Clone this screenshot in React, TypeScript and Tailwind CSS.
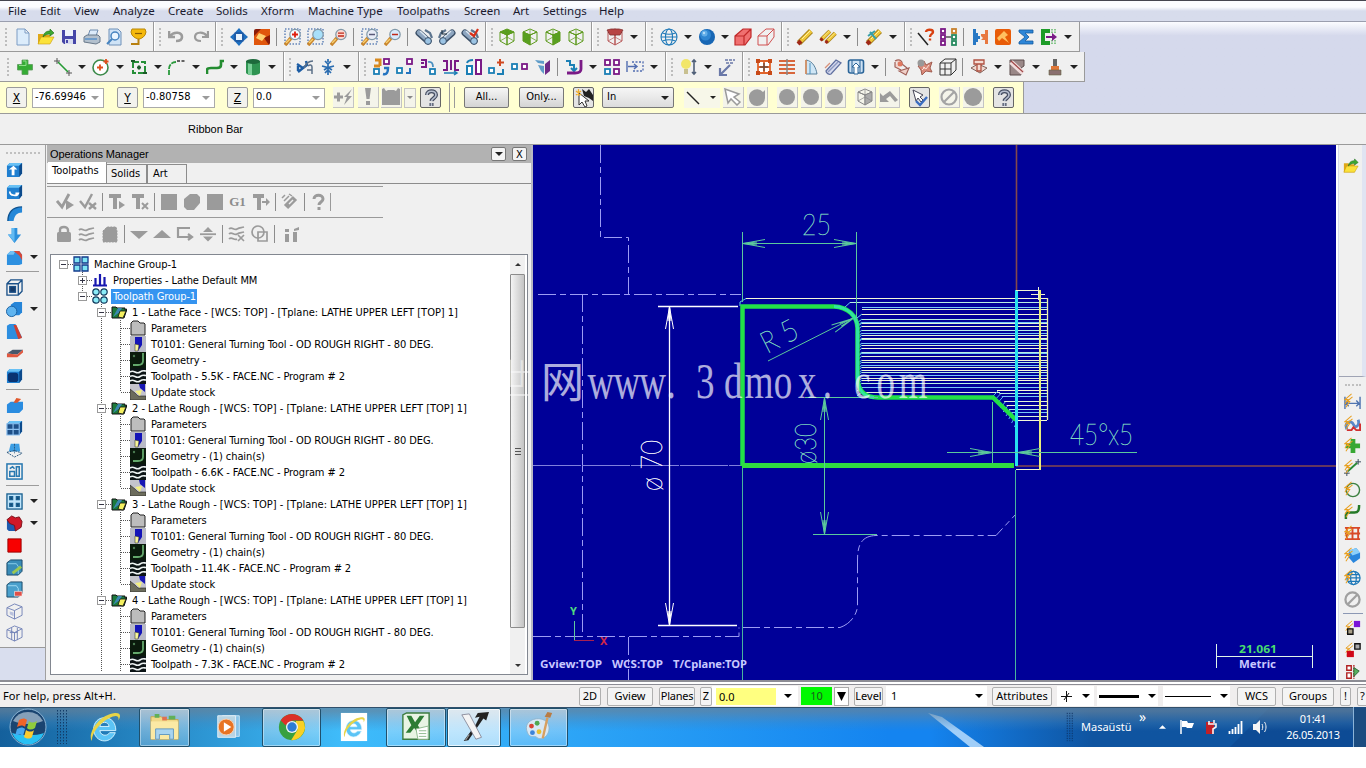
import type { ReactNode } from "react";
import { clsx } from "clsx";

const tahoma = "font-['DejaVu_Sans_Condensed','DejaVu_Sans',sans-serif]";
const segoe = "font-['Noto_Sans','Open_Sans',sans-serif]";

// ---------------------------------------------------------------- icons
// every glyph is drawn on an 18x18 grid

const bolt = (
  <path d="M8 1L1 7h3l-3 5M9 4L3 9h3l-4 6" fill="none" stroke="#e8a020" strokeWidth="1.1" />
);

const lens = (ring: string, sign?: ReactNode, box?: boolean) => (
  <>
    {box && <rect x="1" y="1" width="15" height="15" fill="none" stroke="#1c4f9c" strokeDasharray="1.5 1.5" />}
    <path d="M1 17L7 10" stroke="#c8852c" strokeWidth="3.6" />
    <path d="M2 15L6 11" stroke="#f7d070" strokeWidth="1.4" />
    <circle cx="11" cy="6.5" r="5.2" fill={ring} stroke="#8098a8" strokeWidth="1.2" />
    {sign}
  </>
);

const cube = (face: number, line = "#5d9a1c", fill = "#58a020") => (
  <g stroke={line} strokeWidth="1" strokeLinejoin="round">
    <path d="M9 1l7 3-7 3-7-3z" fill={face === 0 ? fill : "none"} />
    <path d="M2 4v9l7 4V7z" fill={face === 1 ? fill : "none"} />
    <path d="M16 4v9l-7 4V7z" fill={face === 2 ? fill : "none"} />
    <path d="M2 13l7-4 7 4M9 2v6" fill="none" strokeWidth=".7" />
  </g>
);

const blueBox = (extra?: ReactNode) => (
  <>
    <path d="M1 5l3-3h13v11l-3 4H1z" fill="#1f7fd0" />
    <path d="M1 5l3-3h13l-3 3z" fill="#69c1f5" />
    <path d="M14 5l3-3v11l-3 4z" fill="#0c4a8c" />
    {extra}
  </>
);

const wireBox = (line: string, inner?: ReactNode) => (
  <>
    <path d="M1 5l8-4 8 3v9l-8 4-8-4zM1 5l8 3 8-4M9 8v9" fill="none" stroke={line} />
    {inner}
  </>
);

const binocular = (extra?: ReactNode) => (
  <>
    <path d="M4 5l9 8" stroke="#3c5068" strokeWidth="7" strokeLinecap="round" />
    <path d="M4 4.500l8 7" stroke="#8ea6c0" strokeWidth="4.500" strokeLinecap="round" />
    <path d="M5 3l7 6.500" stroke="#dde8f2" strokeWidth="1.400" />
    <circle cx="13" cy="13" r="3.400" fill="#9cc4e4" stroke="#3c5068" />
    <path d="M10 2l5 3 2 5" fill="none" stroke="#5c748e" strokeWidth="2.200" />
    {extra}
  </>
);

const pencil = (
  <>
    <path d="M3 15L15 3" stroke="#a88420" strokeWidth="5.600" />
    <path d="M4 14L15 3" stroke="#f0c838" strokeWidth="3.800" />
    <path d="M2 16l3-3" stroke="#a02818" strokeWidth="4" />
    <path d="M6 11l8-8" stroke="#fff0a0" />
  </>
);

const sq = (x: number, y: number, c: string, s = 5) => (
  <rect x={x} y={y} width={s} height={s} fill="#fff" stroke={c} strokeWidth="1.8" />
);

const G = "#9b9b9b";
const teal = "#1b7fb5";
const plum = "#7a1a86";

const icons: Record<string, ReactNode> = {
  new: <path d="M3 1h8l4 4v12H3zM11 1v4h4" fill="#dcecfb" stroke="#7d9cc4" />,
  open: (
    <>
      <path d="M1 16V6h5l1 1h6v9z" fill="#e0a818" />
      <path d="M1 16l3-7h13l-4 7z" fill="#fbe23a" stroke="#c99a10" strokeWidth=".6" />
      <path d="M6 9c1-5 4-6 7-6V1l4 4-4 3V6c-3 0-5 1-7 3z" fill="#3da832" stroke="#1d6a18" strokeWidth=".6" />
    </>
  ),
  save: (
    <>
      <path d="M2 2h14v14H4l-2-2z" fill="#4646a8" />
      <rect x="5" y="2" width="8" height="6" fill="#eef2fb" />
      <rect x="5" y="11" width="8" height="5" fill="#d8dcf0" />
      <rect x="6" y="12" width="2" height="3" fill="#4646a8" />
    </>
  ),
  print: (
    <>
      <path d="M5 8l2-6h8l-2 6z" fill="#dcebfa" stroke="#6f8cae" />
      <path d="M1 9l3-2h11l2 2v5l-4 2-12-2z" fill="#b3c0cd" stroke="#68788a" />
      <path d="M2 11h12" stroke="#5a92c8" strokeWidth="1.5" />
    </>
  ),
  preview: (
    <>
      <path d="M3 1h9l3 3v13H3z" fill="#cfe3f6" stroke="#6f90b8" />
      <circle cx="9" cy="8" r="4" fill="#eaf6ff" stroke="#4684c0" strokeWidth="1.5" />
      <path d="M6 11l-5 5" stroke="#4684c0" strokeWidth="2" />
    </>
  ),
  verify: (
    <>
      <path d="M3 1h13l1 3-1 3c-2 3-5 4-6 4S5 10 3 7L2 4z" fill="#f5b90c" stroke="#b98706" />
      <path d="M6 5.500h7" fill="none" stroke="#8a5c04" strokeWidth="1.200" />
      <path d="M9.500 11v5H2" fill="none" stroke="#b88010" strokeWidth="2" />
    </>
  ),
  undo: <path d="M1 3v6h6M2 8c4-5 12-4 12 1 0 3-3 4-6 4" fill="none" stroke={G} strokeWidth="2.6" />,
  redo: <path d="M17 3v6h-6M16 8C12 3 4 4 4 9c0 3 3 4 6 4" fill="none" stroke={G} strokeWidth="2.2" />,
  fit: (
    <>
      <path d="M9 0l4 4.500H5zM9 18l4-4.500H5zM0 9l4.500-4v8zM18 9l-4.500-4v8z" fill="#1d6fc0" />
      <rect x="5" y="5" width="8" height="8" rx="1" fill="#e8f2fc" stroke="#1d5ca8" strokeWidth="2" />
    </>
  ),
  repaint: (
    <>
      <rect x="1" y="1" width="16" height="16" rx="2" fill="#8a1c08" />
      <path d="M1 17V8l7-7h9v6l-6 3 5 7z" fill="#e0560c" />
      <path d="M6 5l7 3-4 5-6-3z" fill="#ffd070" />
    </>
  ),
  zoomWin: lens("#f4fbff", <path d="M11 3.500v6M8 6.500h6" stroke="#e02010" strokeWidth="1.8" />, true),
  zoomTarget: lens("#a8e0fa", null, true),
  zoomIn: lens("#fbd8d0", <path d="M8 5.200h6M8 8h6" stroke="#c02818" strokeWidth="1.3" />),
  unzoom: lens("#e8ecf6", <path d="M8 6.500h6" stroke="#5a5a78" strokeWidth="1.5" />, true),
  unzoom2: lens("#d8eafc", <path d="M8 6.500h6" stroke="#c02818" strokeWidth="1.5" />),
  bino1: binocular(),
  bino2: <g transform="matrix(-1 0 0 1 18 0)">{binocular(<path d="M9 6h5V2" fill="none" stroke="#123" />)}</g>,
  bino3: binocular(<path d="M9 5l4 3 4-7" fill="none" stroke="#d83018" strokeWidth="2.200" />),
  cubeTop: cube(0),
  cubeFront: cube(1),
  cubeRight: cube(2),
  cubeIso: cube(3),
  cubeRed: (
    <>
      {cube(3, "#b85858", "none")}
      <path d="M1 2l4-1h8l4 1-3 5H4z" fill="#b84444" stroke="#803030" strokeWidth=".8" />
    </>
  ),
  globe: (
    <g fill="none" stroke="#1d78b8" strokeWidth="1.1">
      <circle cx="9" cy="9" r="8" />
      <ellipse cx="9" cy="9" rx="3.500" ry="8" />
      <path d="M1 9h16M2.500 5c4 1.500 9 1.500 13 0M2.500 13c4-1.500 9-1.500 13 0" />
    </g>
  ),
  sphere: (
    <>
      <circle cx="9" cy="9" r="8" fill="#1766b4" />
      <circle cx="7.500" cy="7" r="5.500" fill="#2f86d2" />
      <circle cx="6.500" cy="5.500" r="3" fill="#62aee8" />
      <circle cx="6" cy="5" r="1.200" fill="#b4dcf8" />
    </>
  ),
  solidRed: <path d="M1 8l8-7h8v8l-6 8H1zM1 8h9v9M10 8l7-7" fill="#f07070" stroke="#c02828" strokeWidth="1.200" />,
  wireRed: <path d="M1 8l8-7h8v8l-6 8H1zM1 8h9v9M10 8l7-7" fill="none" stroke="#d05050" />,
  pencil,
  pencils: (
    <>
      <g transform="translate(5 3) scale(.75)">{pencil}</g>
      <g transform="translate(0 1) scale(.72)">{pencil}</g>
    </>
  ),
  pencilBlue: (
    <>
      {pencil}
      <path d="M5 4l6 7M3 8l7-5" stroke="#38a0a8" strokeWidth="2" />
    </>
  ),
  whatLine: (
    <>
      <path d="M1 5l10 12" stroke="#222" strokeWidth="1.500" />
      <path d="M9 4c0-3 7-3 7 0 0 2-3 2-3 5M13 10.500v2" fill="none" stroke="#d84010" strokeWidth="2.400" />
    </>
  ),
  levels: (
    <>
      {[1, 7, 13].map((y) => (
        <g key={y}>
          {sq(1, y, plum, 4)}
          {sq(12, y, y === 1 ? "#c8802c" : "#278a60", 4)}
        </g>
      ))}
      <path d="M6 9h5" stroke="#555" strokeWidth="1.500" />
    </>
  ),
  import: (
    <>
      <path d="M2 1h3v4h2v3h2v3H7v3H5v3H2z" fill="#2878c4" />
      <path d="M17 2h-3v4h-4v2l2 2-2 2h4v4h3z" fill="#e87840" />
    </>
  ),
  flame: (
    <>
      <rect x="1" y="1" width="16" height="16" rx="2" fill="#e85c08" />
      <path d="M3 10l7-7 4 4-3 2 4 6-7-5-3 3z" fill="#ffc060" />
    </>
  ),
  sigma: <path d="M16 2H2v2l6 5-6 5v2h14v-3H8l4-4-4-4h8z" fill="#2d86d8" stroke="#155aa0" strokeWidth=".8" />,
  post: (
    <>
      <path d="M10 3H3v12h7" fill="none" stroke="#1e9c28" strokeWidth="4" />
      <path d="M12 1v5M15 1v5M12 12v5M15 12v5" stroke="#1e9c28" strokeDasharray="1.500 1" />
      <path d="M6 8h6V5l5 4-5 4v-3H6z" fill={plum} />
    </>
  ),
  plus: (
    <>
      <path d="M6 2h6v4.500h4.500v5.500H12v4.500H6V12H1.500V6.500H6z" fill="#35ac34" stroke="#5a9a5a" strokeWidth=".8" />
      <path d="M7 3h3v4.500H3" fill="none" stroke="#8ce088" />
    </>
  ),
  line: (
    <>
      <path d="M4 4l10 10" stroke="#259a34" strokeWidth="1.600" />
      <path d="M0 3h6M3 0v6M12 15h6M15 12v6" stroke="#555" />
    </>
  ),
  arc: (
    <>
      <circle cx="8.500" cy="9.500" r="7.500" fill="#fff" stroke="#3c8a4a" strokeWidth="1.600" />
      <path d="M8 6.500v6M5 9.500h6M14 1v5M11.500 3.500h5" stroke="#e0501c" strokeWidth="1.800" />
    </>
  ),
  rect: (
    <>
      <path d="M3 4h12v11H3z" fill="none" stroke="#268f38" strokeWidth="2" strokeDasharray="6 2" />
      <path d="M1 3h4M7 9.500h4M9 7.500v4M13 15h4" stroke="#1b5a28" strokeWidth="2.200" />
    </>
  ),
  fillet: (
    <>
      <path d="M1 17v-6c0-4 3-7 7-7" fill="none" stroke="#2a9a3c" strokeWidth="1.800" strokeDasharray="5 1" />
      <path d="M9 3h9" stroke="#333" strokeWidth="1.600" strokeDasharray="3 1.500" />
    </>
  ),
  spline: <path d="M1 16v-4c0-2 2-2 4-2h6c3 0 4-1 4-3V3h3" fill="none" stroke="#238c30" strokeWidth="2.600" />,
  cylinder: (
    <>
      <path d="M2 3v12c2 3 12 3 14 0V3z" fill="#2f9452" />
      <path d="M4 4v12c1 1 3 1 4 1V5z" fill="#7ad098" />
      <ellipse cx="9" cy="3.500" rx="7" ry="2.500" fill="#1d6a3c" />
    </>
  ),
  trim: (
    <>
      <path d="M1 6l6 4-5 4M7 10l4-3-1-4M2 8v5" fill="none" stroke="#1c5ca4" strokeWidth="2.400" />
      <path d="M8 10c2-5 5-7 9-7M12 8c2-2 4-1 4 1v7M11 12h5" fill="none" stroke="#5c7088" strokeWidth="1.500" />
    </>
  ),
  snow: (
    <path
      d="M9 1v3M9 6v6M9 14v3M6 3l3 3 3-3M3 8l6 1.500L15 8M5 12l4-2.500 4 2.500M6 15l3-3 3 3"
      fill="none"
      stroke="#2a6cb0"
      strokeWidth="1.700"
    />
  ),
  x1: (
    <>
      {sq(11, 1, plum)}
      {sq(1, 11, teal)}
      <path d="M2 2h5v6M1 8h6" fill="none" stroke="#d88a20" strokeWidth="3" />
      <path d="M10 16c4 1 5-2 5-6h-4" fill="none" stroke="#2474c0" strokeWidth="2.500" />
    </>
  ),
  x2: (
    <>
      {sq(11, 1, plum)}
      {sq(1, 10, teal)}
      <path d="M10 15h4v-5" fill="none" stroke="#2474c0" strokeWidth="2" />
    </>
  ),
  x3: (
    <>
      <path d="M2 2h5v7H2M2 5h3" fill="none" stroke={plum} strokeWidth="2" />
      {sq(11, 11, teal)}
      <path d="M9 4c4-1 5 2 5 5" fill="none" stroke="#4a90c0" strokeWidth="1.800" />
    </>
  ),
  x4: (
    <>
      <path d="M1 3h4v9H1M17 3h-4v9h4M9 2v10" fill="none" stroke={plum} strokeWidth="2" />
      <path d="M2 15h13M12 13l3 2-3 2" fill="none" stroke={teal} strokeWidth="1.500" />
    </>
  ),
  x5: (
    <>
      <rect x="11" y="2" width="5" height="14" fill="#fff" stroke={plum} strokeWidth="2" />
      <rect x="2" y="8" width="5" height="8" fill="#fff" stroke={teal} strokeWidth="2" />
      <path d="M2 5c1-3 4-3 6-3" fill="none" stroke={teal} strokeWidth="2" />
    </>
  ),
  x6: (
    <>
      <path d="M12 1v7M9 4.500h7" stroke="#d04820" strokeWidth="2" />
      {sq(1, 10, teal)}
      <path d="M9 16h6v-5" fill="none" stroke={teal} strokeWidth="2" />
    </>
  ),
  x7: (
    <>
      {sq(1, 6, teal)}
      {sq(11, 6, plum)}
    </>
  ),
  x8: (
    <>
      <path d="M1 2l9 1v3L4 5zM4 7l6 1v8l-3-3z" fill="#5f9cc8" />
      <path d="M11 6l5-4v11l-5 4z" fill="#6d2a86" />
    </>
  ),
  x9: (
    <>
      <path d="M1 3h4v4h4v5M6 10l3 3 3-3" fill="none" stroke={teal} strokeWidth="2" />
      <path d="M16 2v9c0 3-3 4-6 4H2" fill="none" stroke={plum} strokeWidth="2.800" />
    </>
  ),
  x10: (
    <>
      {sq(2, 2, plum)}
      {sq(11, 2, plum)}
      {sq(2, 11, teal)}
      {sq(11, 11, plum)}
    </>
  ),
  x11: (
    <>
      <path d="M6 4h11v9H6" fill="none" stroke="#506cb0" strokeWidth="1.300" strokeDasharray="2 1.500" />
      <path d="M1 3v11M2 8.500h9M8 6l3 2.500L8 11" fill="none" stroke="#506cb0" strokeWidth="1.400" />
    </>
  ),
  bulb: (
    <>
      <circle cx="6" cy="6" r="5" fill="#f2e66a" />
      <path d="M4 11h4v5H4z" fill="#c8c090" />
      <path d="M14 2v14M12 4l2-2 2 2M12 14l2 2 2-2" fill="none" stroke="#506078" strokeWidth="1.600" />
    </>
  ),
  note: (
    <>
      <path d="M7 2h10M8 5h8" stroke="#6a78a8" strokeWidth="1.500" strokeDasharray="3 1" />
      <path d="M12 7l-9 9M2 10v7h7" fill="none" stroke="#6a78a8" strokeWidth="2.200" />
    </>
  ),
  grid: (
    <>
      <path d="M3 3h12v12H3zM9 3v12M3 9h12" fill="#fff" stroke="#e0642c" strokeWidth="1.800" />
      <path d="M9 5v8M5 9h8" stroke="#444" />
      {[2, 14].map((a) => [2, 14].map((b) => <rect key={a + "-" + b} x={a - 1} y={b - 1} width="4" height="4" fill="#c84a18" />))}
    </>
  ),
  ruled: (
    <>
      <path d="M1 3h16M1 7h16M1 11h16M1 15h16" stroke="#d8663c" strokeWidth="2" />
      <path d="M9 1v16" stroke="#888" strokeWidth="1.500" />
    </>
  ),
  revolve: (
    <>
      <path d="M5 16V2c7 1 10 8 11 14z" fill="#cfe6f6" stroke="#58809c" />
      <path d="M9 16V5" stroke="#4c90bc" />
      <path d="M5 2v14" stroke="#e08a50" strokeWidth="1.500" />
    </>
  ),
  sweep: (
    <>
      <path d="M2 13L12 2l5 3L7 16c-2 1-5-1-5-3z" fill="#d6daee" stroke="#6070a0" strokeWidth="1.300" />
      <path d="M4 14L14 4" stroke="#8c98c0" strokeWidth="1.500" />
      <path d="M1 10l5-5" stroke="#d89078" strokeWidth="1.300" />
    </>
  ),
  netUp: (
    <>
      <rect x="1.500" y="2" width="15" height="13" rx="2" fill="#cfe2f4" stroke="#2a6498" strokeWidth="1.600" />
      <path d="M5 2v12M13 2v12" stroke="#2a6498" />
      <path d="M9 5l4 4h-2v7H7V9H5z" fill="#fff" stroke="#2a6498" />
    </>
  ),
  drill: (
    <>
      <path d="M2 3c5-3 9 1 6 5M2 4v5l6 3M6 13l10-3-3 7-7-4zM9 6l5 4" fill="#f0d0c8" stroke="#a06058" strokeWidth="1.200" />
      <circle cx="7" cy="6" r="2.500" fill="#e07860" />
    </>
  ),
  swirl: (
    <>
      <path d="M2 8l6-5 2 4 6-3-2 6 2 4-6-1-4 4-1-5z" fill="#d88878" stroke="#a05c50" />
      <path d="M7 9l3 2 3-4M6 12l3-3" fill="none" stroke="#fae0d8" />
      <circle cx="5" cy="5" r="3.500" fill="#999" />
    </>
  ),
  wcube: <path d="M1 5h11v12H1zM1 5l5-4h11v11l-5 5M12 5l5-4M6 5v12M1 11h11" fill="none" stroke="#333" />,
  mill1: (
    <>
      <path d="M1 10l7-4 9 4-7 5z" fill="#f0d8d0" stroke="#806058" />
      <path d="M4 2h10v4H4zM7 6v7h4V6" fill="#f4dcd4" stroke="#b05040" strokeWidth="1.300" />
    </>
  ),
  mill2: (
    <>
      <path d="M2 2h14v6l-3 2v7H2z" fill="#9a8888" stroke="#5c4c4c" />
      <path d="M3 4l12 11" stroke="#f0dcdc" strokeWidth="5" />
      <path d="M3 3l12 11" stroke="#a04848" strokeWidth="1.200" />
    </>
  ),
  mill3: (
    <>
      <path d="M7 1h4v7H7z" fill="#666" />
      <path d="M5 8h8v4H5z" fill="#e07838" />
      <path d="M3 12h12v5H3z" fill="#8a7070" stroke="#664" strokeWidth=".6" />
    </>
  ),

  // grey buttons on the operations manager toolbars
  selAll: (
    <>
      <path d="M1 8l5 6 7-13" fill="none" stroke={G} strokeWidth="2.800" />
      <path d="M10 7l8 5-8 5z" fill={G} />
    </>
  ),
  selNone: <path d="M1 8l5 6 7-13M10 10l7 6M17 10l-7 6" fill="none" stroke={G} strokeWidth="2.400" />,
  regen: <path d="M1 1h12v4H9v11H5V5H1zM11 8l6 4-6 4z" fill={G} />,
  regenX: (
    <>
      <path d="M1 1h12v4H9v11H5V5H1z" fill={G} />
      <path d="M11 10l6 6M17 10l-6 6" stroke={G} strokeWidth="2" />
    </>
  ),
  block: <path d="M1 1h16v16H1z" fill={G} />,
  blob: <path d="M1 6l6-5h7l3 3v6l-6 7H4l-3-3z" fill={G} />,
  tRight: <path d="M1 1h11v4H9v12H5V5H1zM10 8h4V5l4 4-4 4v-3h-4z" fill={G} />,
  feed: (
    <>
      <path d="M5 14L14 5" stroke={G} strokeWidth="6" />
      <path d="M1 5l3-3M3 8l5-5M8 1l3 2" stroke={G} strokeWidth="1.500" />
      <path d="M8 11l4-4" stroke="#eee" strokeWidth="1.500" />
    </>
  ),
  helpG: <path d="M4 6c0-5 9-5 9 0 0 3-4 3-4 6M9 14v3" fill="none" stroke={G} strokeWidth="3" />,
  lock: (
    <>
      <rect x="2" y="7" width="14" height="10" rx="1.500" fill={G} />
      <path d="M5 8V5c0-4 8-4 8 0v3" fill="none" stroke={G} strokeWidth="2.400" />
    </>
  ),
  waves: (
    <path
      d="M1 5c3-3 5 2 8 0s4-1 7-2M1 10c3-3 5 2 8 0s4-1 7-2M1 15c3-3 5 2 8 0s4-1 7-2"
      fill="none"
      stroke={G}
      strokeWidth="1.800"
    />
  ),
  lockW: <path d="M2 6l4-4h9l1 4v11H2z" fill={G} stroke={G} strokeDasharray="2 1" />,
  down: <path d="M0 6h18l-9 8z" fill={G} />,
  up: <path d="M0 13h18L9 5z" fill={G} />,
  loop: <path d="M14 3H2v9h13M12 9l4 3-4 3" fill="none" stroke={G} strokeWidth="2.200" />,
  updown: (
    <>
      <path d="M4 7h10L9 2zM4 11.500h10l-5 5z" fill={G} />
      <path d="M1 9.200h16" stroke={G} strokeWidth="1.800" />
    </>
  ),
  wavesX: (
    <path
      d="M1 4c3-3 5 2 8 0s4-1 7-2M1 9c3-3 5 2 8 0s4-1 7-2M1 14c3-3 5 2 8 0M10 10l6 6M16 10l-6 6"
      fill="none"
      stroke={G}
      strokeWidth="1.700"
    />
  ),
  overlap: (
    <g fill="none" stroke={G} strokeWidth="1.700">
      <circle cx="7" cy="7" r="6" />
      <path d="M7 7h9v9H7z" />
    </g>
  ),
  cols: <path d="M3 9h4v8H3zM11 7h4v10h-4zM3 4h4v3H3zM12 4l5-2v3l-5 1z" fill={G} />,

  // solids bar
  extrude: blueBox(<path d="M8 5l4 4h-3v6H6V9H3z" fill="#fff" />),
  spin: blueBox(<path d="M4 9c0 5 8 5 9 2h-3" fill="none" stroke="#fff" strokeWidth="1.800" />),
  bend: (
    <>
      <path d="M2 17C2 8 7 2 17 2v6c-5 0-8 3-9 9z" fill="#2487d8" />
      <path d="M2 17C2 8 7 2 17 2" fill="none" stroke="#0d5290" strokeWidth="1.400" />
    </>
  ),
  drop: (
    <>
      <path d="M6 1h6v7h4l-7 9-7-9h4z" fill="#2c90dc" />
      <path d="M6 1h3v15L2 8h4z" fill="#62baf2" />
    </>
  ),
  solidFillet: (
    <>
      <path d="M1 6l4-4h9l3 4v10l-3 1H1z" fill="#2d90e0" />
      <path d="M1 6l4-4h5l-2 4z" fill="#70c0f4" />
      <path d="M8 2h6l3 4v6l-3-5z" fill="#d84838" />
    </>
  ),
  shell: (
    <g fill="none" stroke="#1a5088" strokeWidth="1.400">
      <path d="M1 5l4-4h12v12l-4 4H1zM1 5h12v12M13 5l4-4" />
      <rect x="4" y="8" width="6" height="6" fill="#163a68" />
    </g>
  ),
  bool: (
    <>
      <path d="M5 4l4-3h8v11l-3 3H6z" fill="#2585d8" />
      <circle cx="6" cy="11" r="5.500" fill="#5fb4f0" stroke="#1a60a0" />
    </>
  ),
  draft: (
    <>
      <path d="M1 3l3-2h6l7 14-3 2H1z" fill="#2d8ee0" />
      <path d="M8 2l3 0 6 14-4 1z" fill="#d04030" />
    </>
  ),
  slab: (
    <>
      <path d="M1 9l6-4h11l-6 5z" fill="#48586c" />
      <path d="M1 9v4h11v-3zM12 10v3l6-5V5z" fill="#e05840" />
    </>
  ),
  navy: blueBox(<rect x="2" y="6" width="11" height="10" rx="3" fill="#0a3472" />),
  boxLid: (
    <>
      <path d="M1 8l4-3h13v8l-4 4H1z" fill="#2a8ce0" />
      <path d="M8 6l3-5 5 1-4 4z" fill="#e0582c" />
    </>
  ),
  pane: blueBox(<path d="M1 5h13v12H1zM7.500 5v12M1 11h13" fill="#1d4f88" stroke="#8cc0f0" strokeWidth="1.200" />),
  unfold: (
    <>
      <path d="M5 3h9l1 8H3z" fill="#3c9ee4" />
      <path d="M1 12l8-2 8 3-8 4zM9 3v10" fill="none" stroke="#27557c" strokeDasharray="2 1" />
    </>
  ),
  layout: (
    <g fill="none" stroke="#2878b0" strokeWidth="1.600">
      <rect x="1" y="1" width="16" height="16" />
      <rect x="11" y="4" width="3" height="10" />
      <path d="M4 9h5v5H4zM4 6l3-2 2 2" />
    </g>
  ),
  four: (
    <g stroke="#1a6090" strokeWidth="1.400" fill="#bfe4fa">
      <rect x="1" y="1" width="16" height="16" />
      <path d="M4 4h3v3H4zM11 4h3v3h-3zM4 11h3v3H4zM11 11h3v3h-3z" fill="#124a78" />
    </g>
  ),
  redBlue: (
    <>
      <path d="M1 6h9v11H3l-2-2z" fill="#1d5cb0" />
      <path d="M1 5l5-4 4 2 4-1 3 5-1 6-6 4-1-6-5-2z" fill="#d01828" stroke="#7a1018" />
    </>
  ),
  redSq: <path d="M2 2h14v14H2z" fill="#f80000" stroke="#900" />,
  edgeG: (
    <>
      <path d="M1 4l4-3h12v12l-4 4H1z" fill="#3a8cb8" stroke="#184868" />
      <path d="M2 5h9l2 3v8" fill="none" stroke="#8cd0ec" />
      <path d="M7 15l9-7" stroke="#9cc850" strokeWidth="3" />
    </>
  ),
  edgeR: (
    <>
      <path d="M1 4l4-3h12v12l-4 4H1z" fill="#4aa0cc" stroke="#184868" />
      <path d="M2 5h9l2 3v3" fill="none" stroke="#a4dcf4" />
      <path d="M9 11h8v5H9z" fill="#e05048" stroke="#fff" strokeWidth=".6" />
    </>
  ),
  ghost: wireBox("#7484b8", <path d="M4 9l4 1v4l-4-2z" fill="#b8c0dc" />),
  ghost2: wireBox("#7484b8", <path d="M6 3v13M12 3v13M4 8h8" stroke="#7484b8" fill="none" />),

  // quick mask bar
  qDim: (
    <>
      <path d="M1 4v13M17 4v13M2 11h14M5 8l-3 3 3 3M13 8l3 3-3 3" fill="none" stroke="#4f74b0" strokeWidth="1.500" />
      {bolt}
    </>
  ),
  qCurve: (
    <>
      <path d="M3 15c-3-8 5-10 7-5s7 1 5-5" fill="none" stroke="#5888c8" strokeWidth="3" />
      <path d="M3 16h5l2-3 3 3h4V9" fill="none" stroke="#d03030" strokeWidth="2" />
      {bolt}
    </>
  ),
  qPlus: (
    <>
      <path d="M7 2h5v5h5v5h-5v5H7v-5H2V7h5z" fill="#38a834" />
      {bolt}
    </>
  ),
  qLine: (
    <>
      <path d="M4 13L14 4" stroke="#2a8a38" strokeWidth="2" />
      <path d="M12 3h6M15 0v6M0 15h6M3 12v6" stroke="#345" />
      {bolt}
    </>
  ),
  qArc: (
    <>
      <circle cx="9.500" cy="9.500" r="7" fill="none" stroke="#3c8040" strokeWidth="1.500" />
      {bolt}
    </>
  ),
  qSpline: (
    <>
      <path d="M2 17v-4c0-3 2-3 5-3h4c4 0 5-2 5-8" fill="none" stroke="#247a28" strokeWidth="2.600" />
      {bolt}
    </>
  ),
  qGrid: (
    <>
      <path d="M3 2v14M9 2v14M15 2v14M1 3h16M1 9h16M1 15h16" stroke="#d84828" strokeWidth="2" />
      {bolt}
    </>
  ),
  qSolid: (
    <>
      <path d="M5 4l8-3 4 5v6l-7 5-5-6z" fill="#2a86dc" />
      <path d="M5 4l8-3 4 5-8 3z" fill="#8cd0fa" />
      {bolt}
    </>
  ),
  qGlobe: (
    <>
      <g fill="none" stroke="#1d78b8" strokeWidth="1.300">
        <circle cx="10" cy="9.500" r="7" />
        <ellipse cx="10" cy="9.500" rx="3" ry="7" />
        <path d="M3 9.500h14M4 6h12M4 13h12" />
      </g>
      {bolt}
    </>
  ),
  qNo: (
    <g fill="none" stroke="#a0a0a0" strokeWidth="2.400">
      <circle cx="9" cy="9" r="7.500" />
      <path d="M4 14L14 4" />
    </g>
  ),
  qViolet: (
    <>
      {bolt}
      <path d="M10 1h7v7h-7z" fill="#7a14d8" />
      <path d="M3 10h6v6H3z" fill="#aaa088" stroke="#111" strokeWidth="1.500" />
    </>
  ),
  qRed: (
    <>
      {bolt}
      <path d="M11 2h6v6h-6z" fill="#aaa" stroke="#111" strokeWidth="1.500" />
      <path d="M2 10h8v7H2z" fill="#d00818" />
    </>
  ),
  qGroup: (
    <>
      <path d="M2 2h5v5H2zM2 10h5v6H2z" fill="#fff" stroke="#b02020" strokeWidth="1.600" />
      <path d="M10 1v16" stroke="#b02020" strokeWidth="1.500" strokeDasharray="2 1" />
      <path d="M10 4l6 4-6 6z" fill="#58b060" stroke="#286030" />
    </>
  ),

  // selection bar
  fastPt: (
    <>
      <path d="M0 9h9M4.500 4.500v9" stroke={G} strokeWidth="3" />
      <path d="M18 1l-8 8h3l-3 8 8-9h-4z" fill={G} />
    </>
  ),
  bang: <path d="M6 0h6l-1.500 11h-3zM7 13h4v4H7z" fill={G} />,
  android: <path d="M0 1l2-1 2 3 2-1h6l2 1 2-3 2 1v16H0z" fill={G} />,
  help: (
    <>
      <path d="M5 6c0-5 9-5 9 0 0 3-4 3-4.500 6M9.500 14v3" fill="none" stroke="#444c60" strokeWidth="4" />
      <path d="M5 6c0-5 9-5 9 0 0 3-4 3-4.500 6M9.500 14v3" fill="none" stroke="#b8c0d0" strokeWidth="1.600" />
    </>
  ),
  pickDark: (
    <>
      <path d="M7 0l4 3 3-3 4 6v6l-4-3-5-2z" fill="#222" />
      <path d="M4 4v12l3-3 3 5 2-1-2-5h4z" fill="#fff" stroke="#333" />
      <path d="M1 2l5 4M1 6l5-4M3.500 0v7" stroke="#f0b030" strokeWidth="1.300" />
    </>
  ),
  lineSel: <path d="M3 3l12 12" stroke="#222" strokeWidth="1.400" />,
  cursorG: <path d="M1 1l3 14 3-4 6 6 3-3-6-5 5-3z" fill="#fff" stroke={G} strokeWidth="1.500" />,
  disc: <circle cx="9" cy="9" r="8" fill={G} />,
  discCut: <path d="M1 9a8 8 0 0 1 14-5l2-2v8a8 8 0 0 1-16 0z" fill={G} />,
  cubeG: cube(2, "#888", "#aaa"),
  arrowG: <path d="M0 14V5l3 3 7-5 8 9-3 2-5-6-4 3 3 3z" fill={G} />,
  check: (
    <>
      <path d="M2 1l3 11 2-3 3 4 2-2-3-3 3-2z" fill="#fff" stroke="#445" />
      <path d="M5 12l4 4 7-8" fill="none" stroke="#3a6cc0" strokeWidth="2.400" />
    </>
  ),
  noG: (
    <g fill="none" stroke="#a4a4a4" strokeWidth="2.200">
      <circle cx="9" cy="9" r="7.500" />
      <path d="M4 14L14 4" />
    </g>
  ),
  bigDisc: <circle cx="9" cy="9" r="9" fill={G} />,
};

function Ico({ n, className = "size-[18px]" }: { n: string; className?: string }) {
  return (
    <svg viewBox="0 0 18 18" className={clsx("shrink-0", className)}>
      {icons[n]}
    </svg>
  );
}

function Caret({ className = "h-1 w-2 text-[#222]" }: { className?: string }) {
  return (
    <svg viewBox="0 0 8 4" className={clsx("shrink-0", className)}>
      <path d="M0 0h8L4 4z" fill="currentColor" />
    </svg>
  );
}

// Tokens: icon names, "v" dropdown arrow, "|" divider ("!" is the tighter one),
// "#" end of one bar and grip of the next
function ToolItem({ t }: { t: string }) {
  if (t === "v" || t === "v-")
    return (
      <span className={clsx("flex shrink-0 items-center justify-center", t === "v" ? "w-[15px]" : "w-[13px]")}>
        <Caret />
      </span>
    );
  if (t === "|") return <span className="ml-[3px] mr-1 h-[18px] w-px shrink-0 bg-[#8c8c8c]" />;
  if (t === "!") return <span className="ml-[3px] mr-0.5 h-[18px] w-px shrink-0 bg-[#8c8c8c]" />;
  if (t === "#" || t === "#-")
    return (
      <span className={clsx("flex h-full shrink-0 items-center", t === "#" ? "w-4" : "w-3.5")}>
        <span className="ml-1 h-full w-px bg-[#9a9a9a]" />
        <span className="h-full w-px bg-white" />
        <span className="ml-1 h-[18px] border-l-2 border-dotted border-[#bdbdbd]" />
      </span>
    );
  if (t === "G1")
    return (
      <span className="w-[23px] shrink-0 text-center font-['Liberation_Serif',serif] text-[13px] font-bold text-[#8c8c8c]">
        G1
      </span>
    );
  return (
    <span className="flex w-[23px] shrink-0 items-center justify-center">
      <Ico n={t} />
    </span>
  );
}

const fileBar =
  "new open save print preview verify # undo redo # fit repaint | zoomWin zoomTarget zoomIn | unzoom unzoom2 | bino1 bino2 bino3 #- cubeTop cubeFront cubeRight cubeIso # cubeRed v # globe v sphere v- solidRed wireRed # pencil pencils v | pencilBlue v #- whatLine levels | import flame sigma post v".split(
    " ",
  );
const sketchBar =
  "plus v line v arc v rect v fillet v spline v cylinder v #- trim snow v # x1 x2 x3 x4 x5 x6 x7 x8 | x9 v x10 x11 v # bulb v note #- grid ruled revolve sweep netUp v | drill swirl wcube | mill1 v mill2 v mill3 v".split(
    " ",
  );

function Grip() {
  return <span className="h-[18px] shrink-0 border-l-2 border-dotted border-[#bdbdbd]" />;
}

const menus: [string, string][] = [
  ["File", "w-8"],
  ["Edit", "w-[34px]"],
  ["View", "w-[39px]"],
  ["Analyze", "w-[55px]"],
  ["Create", "w-12"],
  ["Solids", "w-[45px]"],
  ["Xform", "w-[47px]"],
  ["Machine Type", "w-[89px]"],
  ["Toolpaths", "w-[67px]"],
  ["Screen", "w-[49px]"],
  ["Art", "w-[30px]"],
  ["Settings", "w-14"],
  ["Help", "w-8"],
];

function MenuBar() {
  return (
    <div className={clsx("flex h-[21px] items-center border-t border-[#45454f] bg-linear-to-b from-[#fbfcff] from-30% to-[#d7dcec] to-50% pl-2 text-[11.500px] text-[#1a1a2e]", segoe)}>
      {menus.map(([label, w]) => (
        <span key={label} className={clsx("shrink-0 whitespace-nowrap", w)}>
          {label}
        </span>
      ))}
    </div>
  );
}

function AxisBox({ label, value, className }: { label: string; value: string; className?: string }) {
  return (
    <div className={clsx("flex items-center", className)}>
      <span className="flex h-[21px] w-[21px] items-center justify-center rounded-[2px] border border-[#9a9a9a] bg-[#f2f2ee] text-[12px] underline">
        {label}
      </span>
      <span className="ml-[5px] flex h-5 w-[72px] items-center justify-between border border-[#aaa] bg-white pl-0.5 pr-1 text-[11px]">
        {value}
        <Caret className="h-1 w-2 text-[#9a9a9a]" />
      </span>
    </div>
  );
}

function SelBtn({ n, className, raised }: { n: string; className?: string; raised?: boolean }) {
  return (
    <span
      className={clsx(
        "flex h-[21px] w-[21px] shrink-0 items-center justify-center",
        raised ? "rounded-[2px] border border-[#666] bg-[#e4e4e4]" : "border-b border-r border-[#c4c4c4] bg-[#f4f4ea]",
        className,
      )}
    >
      <Ico n={n} />
    </span>
  );
}

function SelectionBar() {
  return (
    <div className={clsx("flex h-[31px] w-[1024px] items-center border-r border-[#9a9a9a] bg-[#ffffd2] pl-1.5 text-black", tahoma)}>
      <AxisBox label="X" value="-76.69946" />
      <AxisBox label="Y" value="-0.80758" className="ml-[13px]" />
      <AxisBox label="Z" value="0.0" className="ml-3" />
      <SelBtn n="fastPt" className="ml-2" />
      <SelBtn n="bang" className="ml-1" />
      <SelBtn n="android" className="ml-0.5" />
      <span className="ml-0.5 flex h-5 w-3 items-center justify-center border border-[#c4c4c4] bg-[#f4f4ea]">
        <Caret className="h-[3px] w-1.5 text-[#888]" />
      </span>
      <SelBtn n="help" raised className="ml-1" />
      <span className="ml-2 h-[29px] w-px bg-[#9a9a9a]" />
      <span className="ml-1 h-[21px] w-px bg-[#9a9a9a]" />
      <span className="ml-[9px] flex h-[21px] w-[45px] items-center justify-center rounded-[2px] border border-[#777] bg-linear-to-b from-[#f6f6f6] to-[#d4d4d4] text-[11px]">
        All...
      </span>
      <span className="ml-2.5 flex h-[21px] w-[45px] items-center justify-center rounded-[2px] border border-[#777] bg-linear-to-b from-[#f6f6f6] to-[#d4d4d4] text-[11px]">
        Only...
      </span>
      <SelBtn n="pickDark" raised className="ml-[9px]" />
      <span className="ml-2 flex h-[21px] w-[72px] items-center justify-between rounded-[2px] border border-[#777] bg-linear-to-b from-[#f6f6f6] to-[#dcdcdc] pl-1 pr-1 text-[11px]">
        In
        <Caret />
      </span>
      <span className="ml-2.5 flex h-5 w-9 items-center justify-between bg-[#f7f7e9]">
        <Ico n="lineSel" />
        <Caret className="mr-1 h-[3px] w-1.5 text-[#222]" />
      </span>
      <SelBtn n="cursorG" className="ml-[3px]" />
      <SelBtn n="discCut" className="ml-[3px]" />
      <SelBtn n="disc" className="ml-[9px]" />
      <SelBtn n="disc" className="ml-[3px]" />
      <SelBtn n="disc" className="ml-[3px]" />
      <SelBtn n="cubeG" className="ml-[9px]" />
      <SelBtn n="arrowG" className="ml-[3px]" />
      <SelBtn n="check" raised className="ml-[9px]" />
      <SelBtn n="noG" className="ml-[9px]" />
      <SelBtn n="bigDisc" className="ml-[3px]" />
      <SelBtn n="help" raised className="ml-[9px]" />
    </div>
  );
}

function SideBar() {
  const groups = [
    ["extrude", "spin", "bend", "drop", "solidFillet v"],
    ["shell", "bool v", "draft", "slab", "navy"],
    ["boxLid", "pane", "unfold", "layout"],
    ["four v", "redBlue v", "redSq", "edgeG", "edgeR", "ghost", "ghost2"],
  ];
  return (
    <div className="flex w-[46px] shrink-0 flex-col border-r border-[#a0a0a0] bg-[#d9deee]">
      <div className="border-b border-[#9a9a9a] bg-[#f0f0f0] pb-[3px] pl-1.5 pt-[7px]">
        <div className="mb-1 w-[34px] border-t-2 border-dotted border-[#c0c0c0]" />
        {groups.map((g, i) => (
          <div key={i} className={clsx("mr-1.5", i > 0 && "mt-[3px] border-t border-[#9c9c9c] pt-1")}>
            {g.map((item) => {
              const [n, arrow] = item.split(" ");
              return (
                <div key={n} className="flex h-[22px] items-center">
                  <Ico n={n} className="size-[17px]" />
                  {arrow && <Caret className="ml-[7px] h-1 w-2 text-[#222]" />}
                </div>
              );
            })}
          </div>
        ))}
      </div>
    </div>
  );
}

// ---------------------------------------------------------------- operations tree

const treeIcons: Record<string, ReactNode> = {
  machine: (
    <g fill="#7fe4f4" stroke="#123a8c" strokeWidth="1.300">
      <path d="M1 1h6v6H1zM9 1h6v6H9zM1 9h6v6H1zM9 9h6v6H9z" />
    </g>
  ),
  props: <path d="M1 13.500h14M3.500 6v7M8 2v11M12.500 5v8" stroke="#1717b0" strokeWidth="2.200" fill="none" />,
  group: (
    <g fill="#8cecf8" stroke="#123a5c" strokeWidth="1.200">
      <circle cx="4" cy="4" r="3.200" />
      <circle cx="12" cy="4" r="3.200" />
      <circle cx="4" cy="12" r="3.200" />
      <circle cx="12" cy="12" r="3.200" />
    </g>
  ),
  op: (
    <>
      <path d="M1 14V3h4l1 1h8v2l2-1-3 9z" fill="#1c7a3c" stroke="#111" />
      <path d="M2 13l5-9h4l-2 4" fill="#3a88b0" />
      <path d="M7 13l2-6h6l-3 7z" fill="#f4f060" stroke="#111" strokeWidth=".8" />
    </>
  ),
  params: <path d="M1 15V3l2-2h5l2 2h4l1 1v11z" fill="#bdbdbd" stroke="#222" />,
  tool: (
    <>
      <rect width="16" height="16" fill="#b9bac6" />
      <path d="M5 1h7v8l-4 6-3-6z" fill="#1414b8" />
      <path d="M5 8l4 1-1 6H5z" fill="#f6f49c" stroke="#222" strokeWidth=".5" />
    </>
  ),
  geom: (
    <>
      <rect width="16" height="16" fill="#0a1a0c" />
      <path d="M13 1v8c0 3-2 4-5 4H3" fill="none" stroke="#64a86c" strokeWidth="1.800" />
      <circle cx="4" cy="4" r="1.200" fill="#4a7a50" />
    </>
  ),
  path: (
    <>
      <rect width="16" height="16" fill="#0c1416" />
      <path d="M0 4c4-3 6 3 10 0 3-2 4-1 6-1M0 8.500c4-3 6 3 10 0 3-2 4-1 6-1M0 13c4-3 6 3 10 0 3-2 4-1 6-1" fill="none" stroke="#eef4f4" strokeWidth="1.600" />
    </>
  ),
  stock: (
    <>
      <rect width="16" height="16" fill="#c4c4cc" />
      <path d="M9 0h6v8l-5-4z" fill="#1818b4" />
      <path d="M0 16V5l5 4 3 3h8v4z" fill="#6c6c5c" stroke="#222" strokeWidth=".6" />
      <path d="M5 7l7-1-2 6z" fill="#f4f080" />
    </>
  ),
};

type Cell = "blank" | "vert" | "leaf" | "leafEnd" | "minus" | "minusTop" | "minusEnd" | "plus";

function TreeCell({ kind }: { kind: Cell }) {
  const box = kind === "plus" || kind.startsWith("minus");
  return (
    <svg viewBox="0 0 19 16" className="h-4 w-[19px] shrink-0" shapeRendering="crispEdges">
      <g stroke="#555" strokeDasharray="1 1" fill="none">
        {kind !== "blank" && kind !== "minusTop" && (
          <path d={kind === "leafEnd" || kind === "minusEnd" ? "M9.500 0v8" : "M9.500 0v16"} />
        )}
        {kind !== "blank" && kind !== "vert" && <path d="M10 8.500h9" />}
      </g>
      {box && (
        <>
          <rect x="5.500" y="4.500" width="8" height="8" fill="#fff" stroke="#9a9a9a" />
          <path d={kind === "plus" ? "M7 8.500h5M9.500 6v5" : "M7 8.500h5"} stroke="#334" />
        </>
      )}
    </svg>
  );
}

type Node = { cells: Cell[]; icon: string; text: string; selected?: boolean };

const operation = (title: string, geometry: string, toolpath: string, last?: boolean): Node[] => {
  const leaf: Cell[] = ["blank", "blank", "vert", "leaf"];
  const rows: Node[] = [
    { cells: ["blank", "blank", "minus"], icon: "op", text: `${title} - [WCS: TOP] - [Tplane: LATHE UPPER LEFT [TOP] 1]` },
    { cells: leaf, icon: "params", text: "Parameters" },
    { cells: leaf, icon: "tool", text: "T0101: General Turning Tool - OD ROUGH RIGHT - 80 DEG." },
    { cells: leaf, icon: "geom", text: `Geometry - ${geometry}` },
    { cells: leaf, icon: "path", text: `Toolpath - ${toolpath} - FACE.NC - Program # 2` },
  ];
  if (!last) rows.push({ cells: ["blank", "blank", "vert", "leafEnd"], icon: "stock", text: "Update stock" });
  return rows;
};

const tree: Node[] = [
  { cells: ["minusTop"], icon: "machine", text: "Machine Group-1" },
  { cells: ["blank", "plus"], icon: "props", text: "Properties - Lathe Default MM" },
  { cells: ["blank", "minusEnd"], icon: "group", text: "Toolpath Group-1", selected: true },
  ...operation("1 - Lathe Face", "", "5.5K"),
  ...operation("2 - Lathe Rough", "(1) chain(s)", "6.6K"),
  ...operation("3 - Lathe Rough", "(1) chain(s)", "11.4K"),
  ...operation("4 - Lathe Rough", "(1) chain(s)", "7.3K", true),
];

function OperationsManager() {
  return (
    <div className={clsx("flex w-[487px] shrink-0 flex-col border-r-2 border-[#b8b8c4] bg-[#f0f0f0] pl-px text-[11px] text-black", tahoma)}>
      <div className="flex h-[18px] items-center bg-[#b2b2b2] pl-[3px] pr-1">
        <span className="font-['Liberation_Sans',Arial,sans-serif] text-[11px] tracking-[-0.100px]">Operations Manager</span>
        <span className="ml-auto flex h-3.5 w-[15px] items-center justify-center rounded-[2px] border border-[#777] bg-[#f4f4f4]">
          <Caret />
        </span>
        <span className="ml-1.5 flex h-3.5 w-[15px] items-center justify-center rounded-[2px] border border-[#777] bg-[#f4f4f4] text-[11px] leading-none">
          X
        </span>
      </div>
      <div className="flex h-[21px] items-end border-b border-[#8c8c8c] pl-px">
        <span className="flex h-[21px] w-[59px] items-center border-r border-[#8c8c8c] bg-white pb-0.5 pl-1">Toolpaths</span>
        <span className="flex h-[19px] w-[41px] items-center border-r-2 border-t border-[#8c8c8c] pl-1">Solids</span>
        <span className="flex h-[19px] w-[39px] items-center border-r border-t border-[#8c8c8c] pl-[5px]">Art</span>
      </div>
      <div className="mt-0.5 flex h-[31px] w-[336px] items-center border-t border-[#9a9a9a] pl-1.5">
        {"selAll selNone ! regen regenX ! block blob block G1 tRight ! feed ! helpG".split(" ").map((t, i) => (
          <ToolItem key={i} t={t} />
        ))}
        <span className="h-[18px] w-px bg-[#9a9a9a]" />
      </div>
      <div className="flex h-8 w-[336px] items-center border-t border-[#9a9a9a] pl-[5px]">
        {"lock waves lockW ! down up loop updown ! wavesX overlap | cols".split(" ").map((t, i) => (
          <ToolItem key={i} t={t} />
        ))}
      </div>
      <div className="ml-[3px] mt-[5px] flex h-[421px] w-[478px] border border-[#828790] bg-white">
        <div className="flex min-w-0 flex-1 flex-col overflow-hidden pl-[3px] pt-px">
          {tree.map((n, i) => (
            <div key={i} className="flex h-4 shrink-0 items-center">
              {n.cells.map((c, j) => (
                <TreeCell key={j} kind={c} />
              ))}
              <svg viewBox="0 0 16 16" className="size-4 shrink-0">
                {treeIcons[n.icon]}
              </svg>
              <span
                className={clsx(
                  "ml-[3px] whitespace-nowrap pl-0.5 leading-[15px]",
                  n.cells.length === 3 ? "tracking-[-0.020px]" : "tracking-[-0.100px]",
                  n.selected && "bg-[#3594f0] pr-px text-white",
                )}
              >
                {n.text}
              </span>
            </div>
          ))}
        </div>
        <div className="mr-0.5 flex w-[15px] flex-col items-center bg-[#f0f0f0]">
          <div className="flex h-[19px] items-center">
            <Caret className="h-[3px] w-1.5 rotate-180 text-[#333]" />
          </div>
          <div className="flex h-[354px] w-[15px] flex-col items-center justify-center gap-0.5 rounded-[1px] border border-[#8c8c8c] bg-linear-to-r from-[#f4f4f4] to-[#c4c4c4]">
            <span className="h-px w-1.5 bg-[#555]" />
            <span className="h-px w-1.5 bg-[#555]" />
            <span className="h-px w-1.5 bg-[#555]" />
          </div>
          <div className="mt-auto flex h-[18px] items-center">
            <Caret className="h-[3px] w-1.5 text-[#333]" />
          </div>
        </div>
      </div>
    </div>
  );
}

// ---------------------------------------------------------------- graphics view

const passes = [
  298, 302, 307, 309, 314, 319, 322, 323, 326, 330, 333, 335, 338, 339, 343, 345, 348, 352, 353, 356, 360, 362, 365, 367, 370, 372, 375,
  378, 380, 383, 387, 392,
];
const chamferPasses = [390, 393, 396, 401, 405, 409, 412, 416, 420];
const paleTones = ["#f4f8d8", "#b8f0e4", "#78c8f8", "#e0f4d8"];

function arrowHead(x: number, y: number, deg: number, color: string) {
  return (
    <path
      d="M0 0L22 -4M0 0L22 4M0 0L14 -1.500M0 0L14 1.500"
      transform={`translate(${x} ${y}) rotate(${deg})`}
      stroke={color}
      fill="none"
    />
  );
}

function GraphicsView() {
  const dim = "#5cc89c";
  return (
    <svg viewBox="533 145 803 535" className="h-[535px] w-[803px] shrink-0 bg-[#000098]" fill="none">
      <g stroke="#9c9cf4" strokeDasharray="18 4 6 4">
        <path d="M600.500 145V237.500H628.500V294" />
        <path d="M538 294.500H741" />
        <path d="M582.500 294V637" />
        <path d="M533 636.500H739V627.500" />
        <path d="M628.500 637V680" />
        <path d="M742 627.500H840C850 624 856 616 857.500 607V560C857.500 544 862 536 876 535.500H996L1016 514" />
      </g>
      <path d="M533 465.500H742" stroke="#8080dc" strokeDasharray="48 1" />
      <path d="M1016.500 145V290M1016 466H1336" stroke="#84484c" strokeWidth="1.600" />
      <path d="M742.500 466V680M1015.500 470V680" stroke="#48b49c" />

      {/* roughing passes */}
      {passes.map((y, i) => (
        <path
          key={y}
          d={`M${y < 300 ? 746 : y < 304 ? 850 : 862} ${y + 0.5}H${y === 392 ? 1000 : 1047}`}
          stroke={paleTones[i % 4]}
        />
      ))}
      {passes.slice(4).map((y) => (
        <path key={y} d={`M857 ${y + 4}L862 ${y}`} stroke="#68d0e8" />
      ))}
      <path d="M740 306V302L746 298.500M844 308L850 302.500" stroke="#68d0e8" />
      {chamferPasses.map((y, i) => (
        <path key={y} d={`M${997 + i * 2.4} ${y + 0.5}H1047`} stroke={paleTones[i % 4]} />
      ))}
      {chamferPasses.map((y, i) => (
        <path key={y} d={`M${992 + i * 2.8} ${y + 7}L${998 + i * 2.400} ${y + 1}`} stroke="#58b8f0" />
      ))}
      <path d="M1047.500 298V420" stroke="#eef4a8" strokeWidth="1.300" />

      {/* part profile */}
      <path
        d="M742.500 466V306.500H834C848 307 857 316 857.500 328V378C858 390 864 397.500 878 397.500H993L1016 420"
        stroke="#22e048"
        strokeWidth="4.500"
      />
      <path d="M742 465.500H1014" stroke="#30dc40" strokeWidth="5" />
      <path d="M834 306.500C848 307 857 316 857.500 328V378C858 390 864 397 874 397.500" stroke="#30e4a0" strokeWidth="3" />
      <path d="M1016.500 290V466" stroke="#28e0f0" strokeWidth="3" />
      <path d="M1016 290.500H1040M1016 469.500H1040M1031 294.500H1045M1038.500 287V300" stroke="#f0f4d0" />
      <path d="M1040 290V470" stroke="#e8ec7c" strokeWidth="2" />

      {/* dimensions */}
      <g stroke={dim}>
        <path d="M742.500 232V302M856.500 232V320M742 243.500H857" />
        <path d="M824.500 398V535M805 397.500H878M813 534.500H877" />
        <path d="M992.500 402V463M947 452.500H1137" />
        <path d="M768 361L853 318" />
      </g>
      {arrowHead(743, 243.5, 0, dim)}
      {arrowHead(856, 243.5, 180, dim)}
      {arrowHead(853, 318.5, 153, dim)}
      {arrowHead(824.5, 398, 90, dim)}
      {arrowHead(824.5, 534, -90, dim)}
      {arrowHead(992, 452.5, 180, dim)}
      {arrowHead(1018, 452.5, 0, dim)}
      <path d="M669.500 306V626M658 306.500H738M658 625.500H737" stroke="#fff" strokeWidth="1.300" />
      {arrowHead(669.5, 307, 90, "#fff")}
      {arrowHead(669.5, 625, -90, "#fff")}

      <g className="font-['Lato',sans-serif] font-thin" fill="#80dcc0" stroke="#80dcc0" strokeWidth=".45" fontSize="30">
        <text x="802" y="235" textLength="29" lengthAdjust="spacingAndGlyphs">25</text>
        <text x="1070" y="445" textLength="63" lengthAdjust="spacingAndGlyphs">45°x5</text>
        <text transform="translate(767 354) rotate(-27)" textLength="38" lengthAdjust="spacingAndGlyphs">R 5</text>
        <text transform="translate(816 464) rotate(-90)" textLength="41" lengthAdjust="spacingAndGlyphs">ø30</text>
      </g>
      <text
        transform="translate(662 491) rotate(-90)"
        textLength="51"
        lengthAdjust="spacingAndGlyphs"
        className="font-['Lato',sans-serif] font-thin"
        fill="#fff"
        stroke="#fff"
        strokeWidth=".45"
        fontSize="30"
      >
        ø 70
      </text>

      {/* axis gnomon and view labels */}
      <path d="M574.500 621V640" stroke="#60c8a0" />
      <path d="M574 640.500H594" stroke="#a82050" />
      <g className="font-['Noto_Sans',sans-serif] font-bold" fontSize="11">
        <text x="570" y="615" fill="#50d880">Y</text>
        <text x="600" y="645" fill="#d02848">X</text>
        <g fill="#c8c8ff">
          <text x="540" y="668" textLength="62" lengthAdjust="spacingAndGlyphs">Gview:TOP</text>
          <text x="612" y="668" textLength="51" lengthAdjust="spacingAndGlyphs">WCS:TOP</text>
          <text x="673" y="668" textLength="74" lengthAdjust="spacingAndGlyphs">T/Cplane:TOP</text>
          <text x="1239" y="668" textLength="37" lengthAdjust="spacingAndGlyphs">Metric</text>
        </g>
        <text x="1239" y="653" fill="#48dc70" textLength="38" lengthAdjust="spacingAndGlyphs">21.061</text>
      </g>
      <path d="M1216.500 644V668M1312.500 645V668M1217 656.500H1312" stroke="#e0f4e8" />
    </svg>
  );
}

function QuickMaskBar() {
  const masks = ["qDim", "qCurve", "qPlus", "qLine", "qArc", "qSpline", "qGrid", "qSolid", "qGlobe", "qNo"];
  return (
    <div className="ml-0.5 flex w-7 shrink-0 flex-col items-center overflow-hidden border-l border-[#d4d8e8] bg-[#f0f0f0]">
      <div className="flex h-[232px] w-full shrink-0 justify-center border-b border-r-4 border-b-[#a0a4b4] border-r-[#e0e4f2] pt-[13px]">
        <Ico n="open" className="size-4" />
      </div>
      <div className="mb-1 mt-[7px] w-4 shrink-0 border-t-2 border-dotted border-[#c0c0c0]" />
      {masks.map((n) => (
        <div key={n} className="flex h-[22px] shrink-0 items-center">
          <Ico n={n} className="size-[17px]" />
        </div>
      ))}
      <div className="mb-[3px] mt-[3px] h-px w-5 shrink-0 bg-[#8c98b4]" />
      {["qViolet", "qRed", "qGroup"].map((n) => (
        <div key={n} className="flex h-[22px] shrink-0 items-center">
          <Ico n={n} className="size-4" />
        </div>
      ))}
    </div>
  );
}

// ---------------------------------------------------------------- status bar and taskbar

function StatusBtn({ children, className }: { children: ReactNode; className?: string }) {
  return (
    <span
      className={clsx(
        "flex h-[19px] shrink-0 items-center justify-center rounded-[2px] border border-[#b0b0b0] bg-[#f4f4f4]",
        className,
      )}
    >
      {children}
    </span>
  );
}

function StatusBar() {
  return (
    <div className={clsx("flex h-[22px] items-center overflow-hidden whitespace-nowrap bg-[#f0eeee] text-[11px] text-black", segoe)}>
      <span className="w-[579px] shrink-0 pl-[3px] tracking-[0.130px]">For help, press Alt+H.</span>
      <StatusBtn className="w-[22px]">2D</StatusBtn>
      <StatusBtn className="ml-1.5 w-[46px]">Gview</StatusBtn>
      <StatusBtn className="ml-1.5 w-9 tracking-tight">Planes</StatusBtn>
      <StatusBtn className="ml-[5px] w-3">Z</StatusBtn>
      <span className="flex h-5 w-[86px] shrink-0 items-center bg-white pl-1">
        <span className="h-[17px] w-[60px] bg-[#ffff80] pl-[3px] leading-[17px]">0.0</span>
        <Caret className="ml-[8px] h-1 w-2 text-black" />
      </span>
      <span className="ml-[3px] flex h-[18px] w-[31px] shrink-0 items-center justify-center bg-[#00f800] text-[#1c5a1c]">10</span>
      <span className="ml-0.5 flex h-[19px] w-[15px] shrink-0 items-center justify-center border border-[#aaa] bg-white">
        <svg viewBox="0 0 9 9" className="size-[9px]">
          <path d="M0 0h9L4.500 9z" fill="#000" />
        </svg>
      </span>
      <StatusBtn className="ml-[5px] w-[29px]">Level</StatusBtn>
      <span className="ml-[3px] flex h-5 w-[101px] shrink-0 items-center justify-between bg-white pl-[5px] pr-1">
        1
        <Caret className="h-1 w-2 text-black" />
      </span>
      <StatusBtn className="ml-[5px] w-[60px]">Attributes</StatusBtn>
      <span className="ml-[5px] flex h-5 w-[37px] shrink-0 items-center justify-between bg-white px-1">
        <svg viewBox="0 0 11 11" className="size-[11px]">
          <path d="M5.500 0v11M0 5.500h11M3 9l5-7" stroke="#111" />
        </svg>
        <Caret className="h-1 w-2 text-black" />
      </span>
      <span className="ml-[3px] flex h-5 w-[61px] shrink-0 items-center justify-between bg-white pl-0.5 pr-0.5">
        <span className="h-[3px] w-10 bg-black" />
        <Caret className="h-1 w-2 text-black" />
      </span>
      <span className="ml-[5px] flex h-5 w-[67px] shrink-0 items-center justify-between bg-white pl-0.5 pr-0.5">
        <span className="h-px w-[46px] bg-black" />
        <Caret className="h-1 w-2 text-black" />
      </span>
      <StatusBtn className="ml-[7px] w-[39px]">WCS</StatusBtn>
      <StatusBtn className="ml-1.5 w-[52px]">Groups</StatusBtn>
      <StatusBtn className="ml-1.5 w-[11px]">!</StatusBtn>
      <StatusBtn className="ml-1.5 w-[11px]">?</StatusBtn>
    </div>
  );
}

const ieLogo = (
  <>
    <path
      d="M25.500 21c-2 5-6 8-10.500 8-6 0-10.500-5-10.500-11.500S9 6.500 15 6.500c7 0 11 5 11 12.500H10.500c.5 3 2.500 4.500 5 4.500 2 0 3.500-1 4.500-2.500zM10.500 15h9c-.5-2.500-2-4-4.500-4s-4 1.500-4.500 4z"
      fill="#5cc4f6"
      stroke="#d8f4ff"
      strokeWidth=".9"
    />
    <path d="M3 29C-2 24 8 4 25 2c6-.5 6 3 3.500 7 1-5-3-5-9-2C8 13 2 24 3 29z" fill="#e8d448" />
  </>
);

const taskApps: Record<string, ReactNode> = {
  ie: ieLogo,
  explorer: (
    <>
      <path d="M1 5h11l3 3h15v21H1z" fill="#f0d888" stroke="#c8a850" />
      <path d="M5 2h5v4H5zM20 4h7v4h-7z" fill="#60b058" />
      <path d="M13 5h5v4h-5z" fill="#e07050" />
      <path d="M1 10h29v19H1z" fill="#fbe9a4" />
      <path d="M6 29V18h19v11h-4v-5H10v5z" fill="#a8d4f0" stroke="#6098c0" />
    </>
  ),
  media: (
    <>
      <path d="M9 4h18v22H9z" fill="#88c4e8" stroke="#c8e4f8" />
      <path d="M4 4h19v23H4z" fill="#b8d4e4" stroke="#e4f0f8" />
      <circle cx="13" cy="16" r="8.500" fill="#e87424" stroke="#f8d4b8" />
      <path d="M10.500 11l8 5-8 5z" fill="#fff" />
    </>
  ),
  chrome: (
    <>
      <circle cx="16" cy="16" r="14" fill="#38a040" />
      <path d="M4 9a14 14 0 0 1 24.100 0H16l-7 5z" fill="#dc3028" />
      <path d="M28.100 9.500A14 14 0 0 1 15 30l7-11-2-9.500z" fill="#f8d024" />
      <circle cx="16" cy="16" r="6.500" fill="#eef2f4" />
      <circle cx="16" cy="16" r="5" fill="#2c7cd4" />
    </>
  ),
  iedoc: (
    <>
      <path d="M2 1h28v30H2z" fill="#fff" />
      <g transform="translate(4 4) scale(.78)">{ieLogo}</g>
    </>
  ),
  excel: (
    <>
      <path d="M2 3l4-2h24v28H2z" fill="#e8f4e4" stroke="#3c7c40" strokeWidth="1.500" />
      <path d="M6 4h5l4 7 5-7h5l-7 10 5 8h-5l-4-5-4 5H5l6-8z" fill="#2c7c34" />
      <path d="M16 18l13-3v14H18z" fill="#fff" stroke="#8cb88c" />
      <path d="M19 20h8M19 23h8M19 26h8" stroke="#8cb88c" />
    </>
  ),
  mastercam: (
    <>
      <path d="M5 31l13-18 4-8-5 1 3-5 12-1-3 9-3-2L10 30z" fill="#222" />
      <path d="M3 3l8-1 13 25-6 2z" fill="#f4f4f4" stroke="#778" strokeWidth=".8" />
      <path d="M7 30l4-6" stroke="#999" strokeWidth="1.200" />
    </>
  ),
  paint: (
    <>
      <path d="M3 20C0 10 12 5 20 8c10 3 8 17 0 20-5 2-6-2-9-2s-6 1-8-6z" fill="#d8e8f4" stroke="#90b4cc" />
      <circle cx="8" cy="15" r="2.600" fill="#d84434" />
      <circle cx="14" cy="12" r="2.600" fill="#50a850" />
      <circle cx="9" cy="22" r="2.600" fill="#3c84d8" />
      <circle cx="16" cy="21" r="2.600" fill="#e8c030" />
      <path d="M20 28l5-22" stroke="#d8a060" strokeWidth="2.500" />
      <path d="M22 5l3-5 5 1-2 5z" fill="#b87c44" />
    </>
  ),
};

const taskSlots: { app: string; box: string; open?: "plain" | "active" }[] = [
  { app: "ie", box: "w-[71px] pl-1" },
  { app: "explorer", box: "w-[51px]", open: "plain" },
  { app: "media", box: "ml-[11px] w-[56px]" },
  { app: "chrome", box: "ml-[5px] w-[59px]", open: "plain" },
  { app: "iedoc", box: "w-[65px]" },
  { app: "excel", box: "w-[60px]", open: "plain" },
  { app: "mastercam", box: "ml-px w-[54px]", open: "active" },
  { app: "paint", box: "ml-2 w-[59px]", open: "plain" },
];

function Taskbar() {
  return (
    <div
      className={clsx(
        "relative flex h-10 items-center overflow-hidden bg-linear-to-r from-[#14609c] from-0% via-[#3fbcfa] via-25% to-[#1484f0] to-65% text-white",
        segoe,
      )}
    >
      {/* wallpaper showing through the glass */}
      <div className="absolute inset-0 bg-linear-to-r from-transparent from-68% to-[#0f54a0] to-80%" />
      <svg viewBox="0 0 1366 40" className="absolute inset-0 h-10 w-[1366px]">
        <path d="M928 6L970 40H984L942 10z" fill="#c4e4ff" opacity=".8" />
        <path d="M1270 0H1366V40H1230z" fill="#0c3c80" opacity=".35" />
      </svg>
      <div className="absolute inset-0 bg-linear-to-b from-[#64829c]/70 from-10% via-[#4a86b8]/30 via-40% to-transparent to-60%" />
      <div className="absolute inset-x-0 top-0 h-px bg-[#31506c]" />

      <div className="relative flex h-full items-center">
        <svg viewBox="0 0 40 40" className="ml-2 size-10">
          <circle cx="20" cy="20" r="18" fill="#1a4470" stroke="#8cb4d4" />
          <path d="M4 26a17 17 0 0 0 32 0c-8 3-22 3-32 0z" fill="#28c0f4" />
          <path d="M5 14a17 17 0 0 1 30 0c-9 4-21 4-30 0z" fill="#b4c8d8" opacity=".7" />
          <path d="M11 13c3-2 6-2 8 0l-2 7c-2-2-5-2-8 0z" fill="#f06428" />
          <path d="M21 14c2 2 5 2 8 0l-2 7c-3 2-6 2-8 0z" fill="#90cc3c" />
          <path d="M9 22c3-2 6-2 8 0l-2 7c-2-2-5-2-8 0z" fill="#48a8f0" />
          <path d="M18 23c3 2 6 2 8 0l-2 7c-2 2-5 2-8 0z" fill="#fccc30" />
        </svg>
        <svg viewBox="0 0 12 34" className="ml-2 h-[34px] w-3">
          <path d="M1.500 0v34M4.500 0v34M7.500 0v34M10.500 0v34" stroke="#123c68" strokeDasharray="1.500 1.500" />
        </svg>
        {taskSlots.map(({ app, box, open }) => (
          <span
            key={app}
            className={clsx(
              "flex h-[39px] shrink-0 items-center justify-center",
              box,
              open && "rounded-[2px] border border-[#20506c]",
              open === "plain" && "bg-linear-to-b from-white/50 to-white/20 inset-ring inset-ring-white/40",
              open === "active" && "bg-linear-to-b from-white/80 to-white/60 inset-ring inset-ring-white/70",
            )}
          >
            <svg viewBox="0 0 32 32" className={app === "ie" ? "size-[33px]" : "size-[30px]"}>
              {taskApps[app]}
            </svg>
          </span>
        ))}
      </div>

      <div className="relative ml-auto flex h-full items-center text-[11px]">
        <svg viewBox="0 0 12 34" className="mr-[5px] h-[34px] w-2.5">
          <path d="M1.500 0v34M4.500 0v34M7.500 0v34" stroke="#0a2c5c" strokeDasharray="1.500 1.500" />
        </svg>
        <span className="w-[58px]">Masaüstü</span>
        <span className="mb-5 w-5 text-[14px] leading-none">»</span>
        <Caret className="h-1 w-[7px] rotate-180 text-white" />
        <svg viewBox="0 0 16 16" className="ml-[13px] size-4">
          <path d="M2 1v14" stroke="#fff" strokeWidth="1.500" />
          <path d="M3 2h5l1 2h6l-2 5H8L7 8H3z" fill="#fff" />
        </svg>
        <svg viewBox="0 0 16 16" className="ml-2 size-4">
          <path d="M3 3h8v12H3z" fill="#c02028" />
          <path d="M6 2v3M11 1v3M5 5h8v3l-3 2v5" stroke="#f4f4f4" strokeWidth="1.600" fill="none" />
        </svg>
        <svg viewBox="0 0 16 16" className="ml-[9px] size-4">
          <path d="M1.500 12v3M4.500 10v5M7.500 8v7M10.500 5v10M13.500 2v13" stroke="#fff" strokeWidth="1.800" />
        </svg>
        <svg viewBox="0 0 16 16" className="ml-2 size-4">
          <path d="M1 5h3l4-4v14l-4-4H1z" fill="#f4f4f4" />
          <path d="M10 5c1 2 1 4 0 6M12.500 3c2 3 2 7 0 10" stroke="#f4f4f4" fill="none" />
        </svg>
        <span className="ml-3 flex w-[66px] flex-col items-center leading-4 tracking-tight">
          <span>01:41</span>
          <span>26.05.2013</span>
        </span>
        <span className="ml-[7px] h-10 w-[13px] border-l border-[#8cb4d8] bg-[#1c4c80]" />
      </div>
    </div>
  );
}

export default function App() {
  return (
    <div className="relative flex h-[768px] w-[1366px] flex-col overflow-hidden bg-white">
      <MenuBar />
      <div className="flex flex-col border-t border-[#9a9eae] bg-linear-to-b from-[#fbfcff] to-[#d5d9ec] to-15%">
        <div className="flex h-[30px] w-[1080px] items-center border-b border-r border-[#9a9a9a] bg-[#f0f0f0]">
          <span className="flex w-[11px] shrink-0 justify-center">
            <Grip />
          </span>
          {fileBar.map((t, i) => (
            <ToolItem key={i} t={t} />
          ))}
        </div>
        <div className="flex h-[30px] w-[1085px] items-center border-b border-r border-[#9a9a9a] bg-[#f0f0f0]">
          <span className="flex w-[13px] shrink-0 pl-[7px]">
            <Grip />
          </span>
          {sketchBar.map((t, i) => (
            <ToolItem key={i} t={t} />
          ))}
        </div>
        <SelectionBar />
      </div>
      <div className="flex h-[32px] items-center border-y border-[#9a9a9a] bg-[#f0f0f0] pl-[188px] font-['Liberation_Sans',Arial,sans-serif] text-[11px]">
        Ribbon Bar
      </div>
      <div className="flex h-[535px]">
        <SideBar />
        <OperationsManager />
        <GraphicsView />
        <QuickMaskBar />
      </div>
      <div className="h-[5px] border-b border-t-2 border-[#8c8c94] bg-white" />
      <StatusBar />
      <Taskbar />

      {/* site mark laid over the whole window */}
      <svg viewBox="0 0 1366 768" className="pointer-events-none absolute inset-0 h-[768px] w-[1366px]">
        <g fill="#fff" opacity=".68">
          <g className="font-['Noto_Sans_CJK_SC',sans-serif]" fontSize="43">
            <text x="489" y="396" className="font-light" opacity=".7">世</text>
            <text x="541" y="398">网</text>
          </g>
          <text
            transform="scale(.74 1)"
            x="812 847 882 907 953 991 1026 1058 1091 1118 1165 1197 1234"
            y="398"
            textAnchor="middle"
            className="font-['Liberation_Serif',serif]"
            fontSize="50"
          >
            www.3dmox.com
          </text>
        </g>
      </svg>
    </div>
  );
}
